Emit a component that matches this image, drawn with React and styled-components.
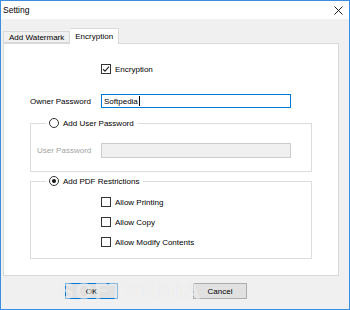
import React from 'react';
import styled, { createGlobalStyle } from 'styled-components';

const GlobalStyle = createGlobalStyle`
  html, body {
    margin: 0;
    padding: 0;
    background: #ffffff;
  }
  * {
    box-sizing: border-box;
  }
`;

const Window = styled.div`
  position: relative;
  display: flex;
  flex-direction: column;
  width: 350px;
  height: 310px;
  border: 1px solid #3d8ee0;
  font-family: 'Liberation Sans', Arial, sans-serif;
  font-size: 8px;
  color: #000;
  overflow: hidden;
`;

const TitleBar = styled.div`
  display: flex;
  align-items: center;
  justify-content: space-between;
  height: 18px;
  padding: 0 6px 0 2px;
  background: #ffffff;
  font-size: 8.5px;
`;

const Body = styled.div`
  flex: 1;
  display: flex;
  flex-direction: column;
  padding: 9px 10px 0 2px;
  background: #f0f0f0;
`;

const TabStrip = styled.div`
  display: flex;
  align-items: flex-end;
  height: 15px;
`;

const Tab = styled.div`
  position: relative;
  display: flex;
  align-items: center;
  height: ${({ $active }) => ($active ? '16px' : '12px')};
  margin-bottom: ${({ $active }) => ($active ? '-1px' : '0')};
  padding: ${({ $active }) => ($active ? '0 5px 1px' : '0 5px')};
  border: 1px solid #d9d9d9;
  border-bottom: ${({ $active }) => ($active ? 'none' : '1px solid #d9d9d9')};
  border-left: ${({ $active }) => ($active ? 'none' : '1px solid #d9d9d9')};
  background: ${({ $active }) => ($active ? '#ffffff' : '#f0f0f0')};
  z-index: ${({ $active }) => ($active ? 1 : 0)};
  white-space: nowrap;
`;

const Panel = styled.div`
  display: flex;
  flex-direction: column;
  height: 233px;
  padding: 20px 25px 0 26px;
  border: 1px solid #d9d9d9;
  background: #ffffff;
`;

const CheckRow = styled.label`
  display: flex;
  align-items: center;
  gap: 4px;
  height: 10px;
  margin-left: ${({ $indent }) => $indent || 0}px;
  margin-top: ${({ $top }) => $top || 0}px;
`;

const Box = styled.span`
  display: flex;
  align-items: center;
  justify-content: center;
  width: 10px;
  height: 10px;
  border: 1px solid #333333;
  background: #ffffff;
  flex-shrink: 0;
`;

const Radio = styled.span`
  display: flex;
  align-items: center;
  justify-content: center;
  width: 10px;
  height: 10px;
  border: 1px solid #333333;
  border-radius: 50%;
  background: #ffffff;
  flex-shrink: 0;

  &::after {
    content: '';
    display: ${({ $checked }) => ($checked ? 'block' : 'none')};
    width: 4px;
    height: 4px;
    border-radius: 50%;
    background: #111111;
  }
`;

const FieldRow = styled.div`
  display: grid;
  grid-template-columns: ${({ $label }) => $label}px 190px;
  align-items: center;
  margin-top: ${({ $top }) => $top || 0}px;
  color: ${({ $disabled }) => ($disabled ? '#a3a3a3' : '#000')};
`;

const TextBox = styled.div`
  display: flex;
  align-items: center;
  height: ${({ $h }) => $h || 14}px;
  padding: 0 2px;
  border: 1px solid ${({ $focused, $disabled }) => ($focused ? '#0078d7' : $disabled ? '#cccccc' : '#7a7a7a')};
  background: ${({ $disabled }) => ($disabled ? '#f0f0f0' : '#ffffff')};
  color: #000;
`;

const Caret = styled.span`
  display: inline-block;
  width: 1px;
  height: 10px;
  margin-left: 1px;
  background: #000;
`;

const Group = styled.fieldset`
  width: 282px;
  min-width: 0;
  margin: ${({ $top }) => $top}px 0 0;
  padding: 0;
  border: 1px solid #dcdcdc;
`;

const Legend = styled.legend`
  display: flex;
  align-items: center;
  gap: 4px;
  height: 10px;
  margin-left: 15px;
  padding: 0 4px 0 3px;
`;

const GroupInner = styled.div`
  display: flex;
  flex-direction: column;
  padding: ${({ $pad }) => $pad};
`;

const Footer = styled.div`
  display: flex;
  align-items: center;
  gap: 75px;
  margin-top: 7px;
  padding-left: 62px;
`;

const Button = styled.div`
  display: flex;
  align-items: center;
  justify-content: center;
  width: ${({ $w }) => $w}px;
  height: 16px;
  border: 1px solid ${({ $default }) => ($default ? '#0078d7' : '#adadad')};
  background: #e1e1e1;
`;

const Watermark = styled.div`
  position: absolute;
  left: 58px;
  top: 279px;
  font-family: 'DejaVu Sans', sans-serif;
  font-weight: bold;
  font-size: 21px;
  letter-spacing: 1px;
  color: rgba(255, 255, 255, 0.55);
  text-shadow: 0 0 1px rgba(0, 0, 0, 0.08);
  pointer-events: none;
`;

const CloseIcon = () => (
  <svg width="9" height="9" viewBox="0 0 9 9">
    <path d="M0.5 0.5 L8.5 8.5 M8.5 0.5 L0.5 8.5" stroke="#222" strokeWidth="1" />
  </svg>
);

const Tick = () => (
  <svg width="8" height="8" viewBox="0 0 8 8">
    <path d="M1 4.2 L3 6.2 L7 1.6" fill="none" stroke="#222" strokeWidth="1.1" />
  </svg>
);

const Check = ({ checked, label, indent, top }) => (
  <CheckRow $indent={indent} $top={top}>
    <Box>{checked && <Tick />}</Box>
    {label}
  </CheckRow>
);

export default function App() {
  const restrictions = ['Allow Printing', 'Allow Copy', 'Allow Modify Contents'];

  return (
    <>
      <GlobalStyle />
      <Window>
        <TitleBar>
          <span>Setting</span>
          <CloseIcon />
        </TitleBar>
        <Body>
          <TabStrip>
            <Tab>Add Watermark</Tab>
            <Tab $active>Encryption</Tab>
          </TabStrip>
          <Panel>
            <Check checked label="Encryption" indent={71} />

            <FieldRow $label={71} $top={20}>
              <span>Owner Password</span>
              <TextBox $focused>
                Softpedia
                <Caret />
              </TextBox>
            </FieldRow>

            <Group $top={10}>
              <Legend>
                <Radio />
                Add User Password
              </Legend>
              <GroupInner $pad="15px 0 13px 6px">
                <FieldRow $label={64} $disabled>
                  <span>User Password</span>
                  <TextBox $disabled $h={15} />
                </FieldRow>
              </GroupInner>
            </Group>

            <Group $top={4}>
              <Legend>
                <Radio $checked />
                Add PDF Restrictions
              </Legend>
              <GroupInner $pad="11px 0 11px 70px">
                {restrictions.map((item, i) => (
                  <Check key={item} label={item} top={i === 0 ? 0 : 10} />
                ))}
              </GroupInner>
            </Group>
          </Panel>
          <Footer>
            <Button $default $w={53}>OK</Button>
            <Button $w={54}>Cancel</Button>
          </Footer>
        </Body>
        <Watermark>SOFTPEDIA</Watermark>
      </Window>
    </>
  );
}
